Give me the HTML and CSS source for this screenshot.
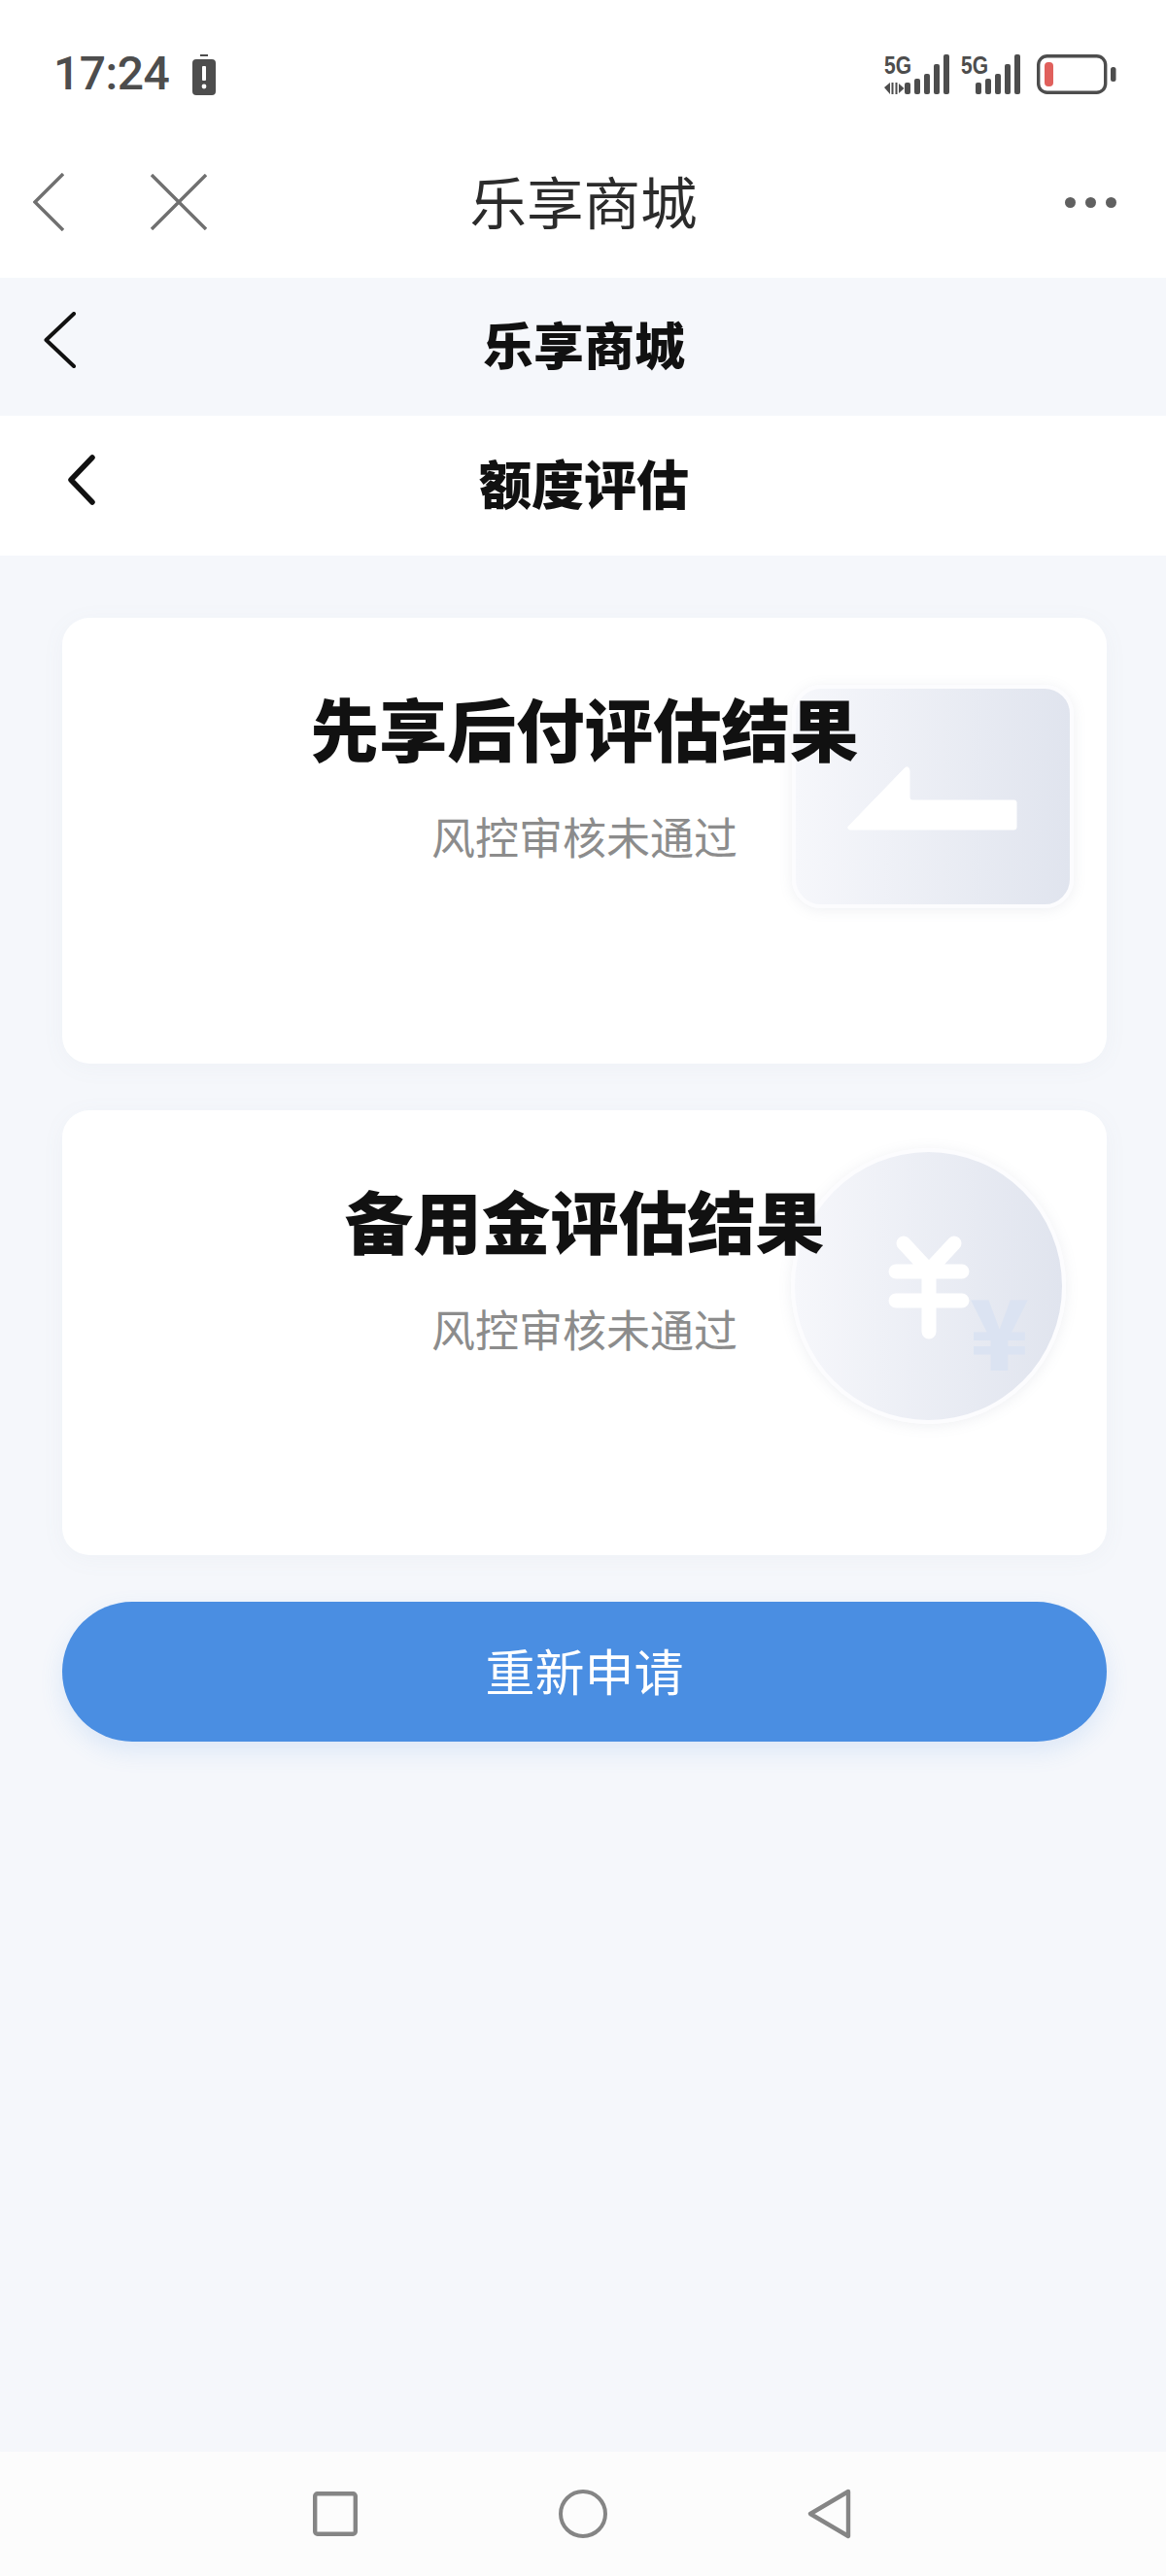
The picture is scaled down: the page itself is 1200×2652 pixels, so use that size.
FILE: index.html
```html
<!DOCTYPE html>
<html lang="zh-CN">
<head>
<meta charset="utf-8">
<title>额度评估</title>
<link rel="stylesheet" href="styles.css">
</head>
<body>
<div class="phone">
  <header class="system">
    <div class="status">
      <div class="status-left">
        <span class="time">17:24</span>
        <svg class="bat-alert" width="24" height="42" viewBox="0 0 24 42"><rect x="8" y="0" width="8" height="2" fill="#4d4d4d"/><rect x="0" y="5" width="24" height="37" rx="4" fill="#4d4d4d"/><rect x="10" y="12" width="4" height="15" rx="1" fill="#fff"/><circle cx="12" cy="33" r="2.4" fill="#fff"/></svg>
      </div>
      <div class="status-right">
        <svg class="sig" width="67" height="50" viewBox="0 -8 67 50">
          <text x="0" y="20" class="sig-text" textLength="28" lengthAdjust="spacingAndGlyphs">5G</text>
          <path d="M0 34l6-5v12zM7.500 29h2v12h-2zM11.500 29h2v12h-2zM15 30l5.500 5-5.500 5z" fill="#4d4d4d"/>
          <rect x="21" y="29" width="6" height="12" rx="2" fill="#4d4d4d"/><rect x="31" y="25" width="6" height="16" rx="2" fill="#4d4d4d"/><rect x="41" y="20" width="6" height="21" rx="2" fill="#4d4d4d"/><rect x="51" y="10" width="6" height="31" rx="2" fill="#4d4d4d"/><rect x="61" y="0" width="6" height="41" rx="2" fill="#4d4d4d"/>
        </svg>
        <svg class="sig" width="62" height="50" viewBox="0 -8 62 50">
          <text x="0" y="20" class="sig-text" textLength="28" lengthAdjust="spacingAndGlyphs">5G</text>
          <rect x="15" y="29" width="6" height="12" rx="2" fill="#4d4d4d"/><rect x="25" y="25" width="6" height="16" rx="2" fill="#4d4d4d"/><rect x="35" y="20" width="6" height="21" rx="2" fill="#4d4d4d"/><rect x="45" y="10" width="6" height="31" rx="2" fill="#4d4d4d"/><rect x="55" y="0" width="6" height="41" rx="2" fill="#4d4d4d"/>
        </svg>
        <svg class="battery" width="82" height="42" viewBox="0 0 82 42"><rect x="1.700" y="1.700" width="69" height="37.600" rx="9" fill="none" stroke="#4d4d4d" stroke-width="3.400"/><rect x="8" y="8" width="9" height="25" rx="4" fill="#e0605c"/><rect x="76" y="13" width="5.500" height="15" rx="2.500" fill="#4d4d4d"/></svg>
      </div>
    </div>
    <nav class="wxbar">
      <div class="wx-left">
        <svg class="ico" width="32" height="60" viewBox="0 0 32 60"><path d="M31 1L2 30l29 29" fill="none" stroke="#707070" stroke-width="3.400"/></svg>
        <svg class="ico" width="58" height="58" viewBox="0 0 58 58"><path d="M1 1l56 56M57 1L1 57" fill="none" stroke="#707070" stroke-width="3.400"/></svg>
      </div>
      <h1 class="wx-title">乐享商城</h1>
      <div class="dots"><i></i><i></i><i></i></div>
    </nav>
  </header>

  <div class="bar bar-a">
    <svg class="bar-back" width="34" height="58" viewBox="0 0 34 58"><path d="M31 2L2.500 29 31 56" fill="none" stroke="#111" stroke-width="4" stroke-linecap="round" stroke-linejoin="round"/></svg>
    <h2 class="bar-title-a">乐享商城</h2>
  </div>

  <div class="bar bar-b">
    <svg class="bar-back-b" width="30" height="52" viewBox="0 0 30 52"><path d="M27 3L5 26l22 23" fill="none" stroke="#111" stroke-width="5.500" stroke-linecap="round" stroke-linejoin="round"/></svg>
    <h2 class="bar-title-b">额度评估</h2>
  </div>

  <main class="content">
    <section class="card">
      <div class="art art-rect">
        <svg width="282" height="222" viewBox="0 0 282 222"><path d="M112 82L54 142a2 2 0 0 0 2 3H225a2 2 0 0 0 2-2V117a2 2 0 0 0-2-2H120a3 3 0 0 1-3-3V85c0-5-3-5-5-3z" fill="#fff" stroke="#fff" stroke-width="1" stroke-linejoin="round"/></svg>
      </div>
      <h3 class="card-title">先享后付评估结果</h3>
      <p class="card-sub">风控审核未通过</p>
    </section>
    <section class="card">
      <div class="art art-circle">
        <svg width="275" height="276" viewBox="-2 -2 275 276"><path d="M110 92l26 28 26-28M102 121h68M102 151h68M136 120v63" fill="none" stroke="#fff" stroke-width="15" stroke-linecap="round" stroke-linejoin="round"/></svg>
        <span class="yen">¥</span>
      </div>
      <h3 class="card-title">备用金评估结果</h3>
      <p class="card-sub">风控审核未通过</p>
    </section>
    <button class="cta">重新申请</button>
  </main>

  <footer class="sysnav">
    <svg width="46" height="46" viewBox="0 0 46 46"><rect x="2.200" y="2.200" width="41.600" height="41.600" rx="2.500" fill="none" stroke="#858585" stroke-width="4.400"/></svg>
    <svg width="50" height="50" viewBox="0 0 50 50"><circle cx="25" cy="25" r="23" fill="none" stroke="#858585" stroke-width="4"/></svg>
    <svg width="46" height="52" viewBox="0 0 46 52"><path d="M42 3L3 26l39 23z" fill="none" stroke="#858585" stroke-width="4.400" stroke-linejoin="round"/></svg>
  </footer>
</div>
</body>
</html>
```
FILE: styles.css
```css
* { box-sizing: border-box; }
html, body { margin: 0; padding: 0; }
body { font-family: "Noto Sans CJK SC", "Noto Sans", sans-serif; background: #f5f7fb; }
h1, h2, h3, p { margin: 0; }

.phone { width: 1200px; height: 2652px; display: flex; flex-direction: column; background: #f5f7fb; overflow: hidden; }

.system { height: 286px; background: #fff; display: flex; flex-direction: column; }
.status { height: 154px; padding: 56px 51px 0 55px; display: flex; justify-content: space-between; align-items: flex-start; }
.status-left { display: flex; align-items: flex-start; gap: 24px; }
.time { font-family: Roboto, sans-serif; font-weight: 500; font-size: 48px; line-height: 40px; color: #4d4d4d; letter-spacing: -.5px; }
.status-right { display: flex; align-items: flex-start; gap: 12px; }
.sig-text { font-family: "Liberation Sans", sans-serif; font-weight: 700; font-size: 26px; fill: #4d4d4d; }
.sig { display: block; margin-top: -8px; }
.battery { display: block; margin-left: 4px; }

.wxbar { position: relative; height: 132px; padding: 0 51px 24px 34px; display: flex; align-items: center; justify-content: space-between; }
.wx-left { display: flex; align-items: center; gap: 89px; }
.ico { display: block; }
.wx-title { position: absolute; left: 1px; right: 0; top: 16px; text-align: center; font-size: 58.500px; line-height: 72px; font-weight: 400; color: #2b2b2b; }
.dots { display: flex; gap: 10px; }
.dots i { display: block; width: 11px; height: 11px; border-radius: 50%; background: #606060; }

.bar { position: relative; display: flex; align-items: center; justify-content: center; }
.bar-a { height: 142px; background: #f5f7fb; }
.bar-b { height: 144px; background: #fff; }
.bar-back { position: absolute; left: 45px; top: 35px; }
.bar-back-b { position: absolute; left: 68px; top: 40px; }
.bar-title-a { font-size: 52px; line-height: 72px; font-weight: 900; color: #111; margin: -6px 0 0 2px; }
.bar-title-b { font-size: 54px; line-height: 72px; font-weight: 900; color: #111; margin: -6px 0 0 2px; }

.content { flex: 1; padding: 64px 61px 0 64px; display: flex; flex-direction: column; gap: 48px; }
.card { position: relative; height: 458.500px; background: #fff; border-radius: 28px; padding-top: 60px; text-align: center; box-shadow: 0 4px 24px rgba(120, 130, 160, .05); }
.card-title { position: relative; font-size: 70.500px; line-height: 104px; font-weight: 900; color: #111; }
.card-sub { position: relative; margin-top: 31px; font-size: 45px; line-height: 60px; color: #8c8c8c; }

.art { position: absolute; background: linear-gradient(90deg, #f6f7fb, #e0e4ee); border: 4px solid #fcfcfe; box-shadow: 0 2px 14px rgba(120, 130, 160, .12); }
.art svg { display: block; }
.art-rect { left: 751px; top: 69px; width: 290px; height: 230px; border-radius: 30px; }
.art-circle { left: 750px; top: 39px; width: 283px; height: 284px; border-radius: 50%; }
.yen { position: absolute; left: 180px; top: 114px; font-size: 100px; line-height: 136px; font-weight: 900; color: #dbe3f2; }

.cta { height: 144px; width: 1075px; border: 0; padding: 0 0 4px; border-radius: 72px; background: #4a8ee2; color: #fff; font-family: inherit; font-size: 51px; box-shadow: 0 10px 24px rgba(74, 142, 226, .14); }

.sysnav { height: 128px; background: #fcfcfc; display: flex; align-items: center; padding: 0 323px 0 322px; justify-content: space-between; }
```
